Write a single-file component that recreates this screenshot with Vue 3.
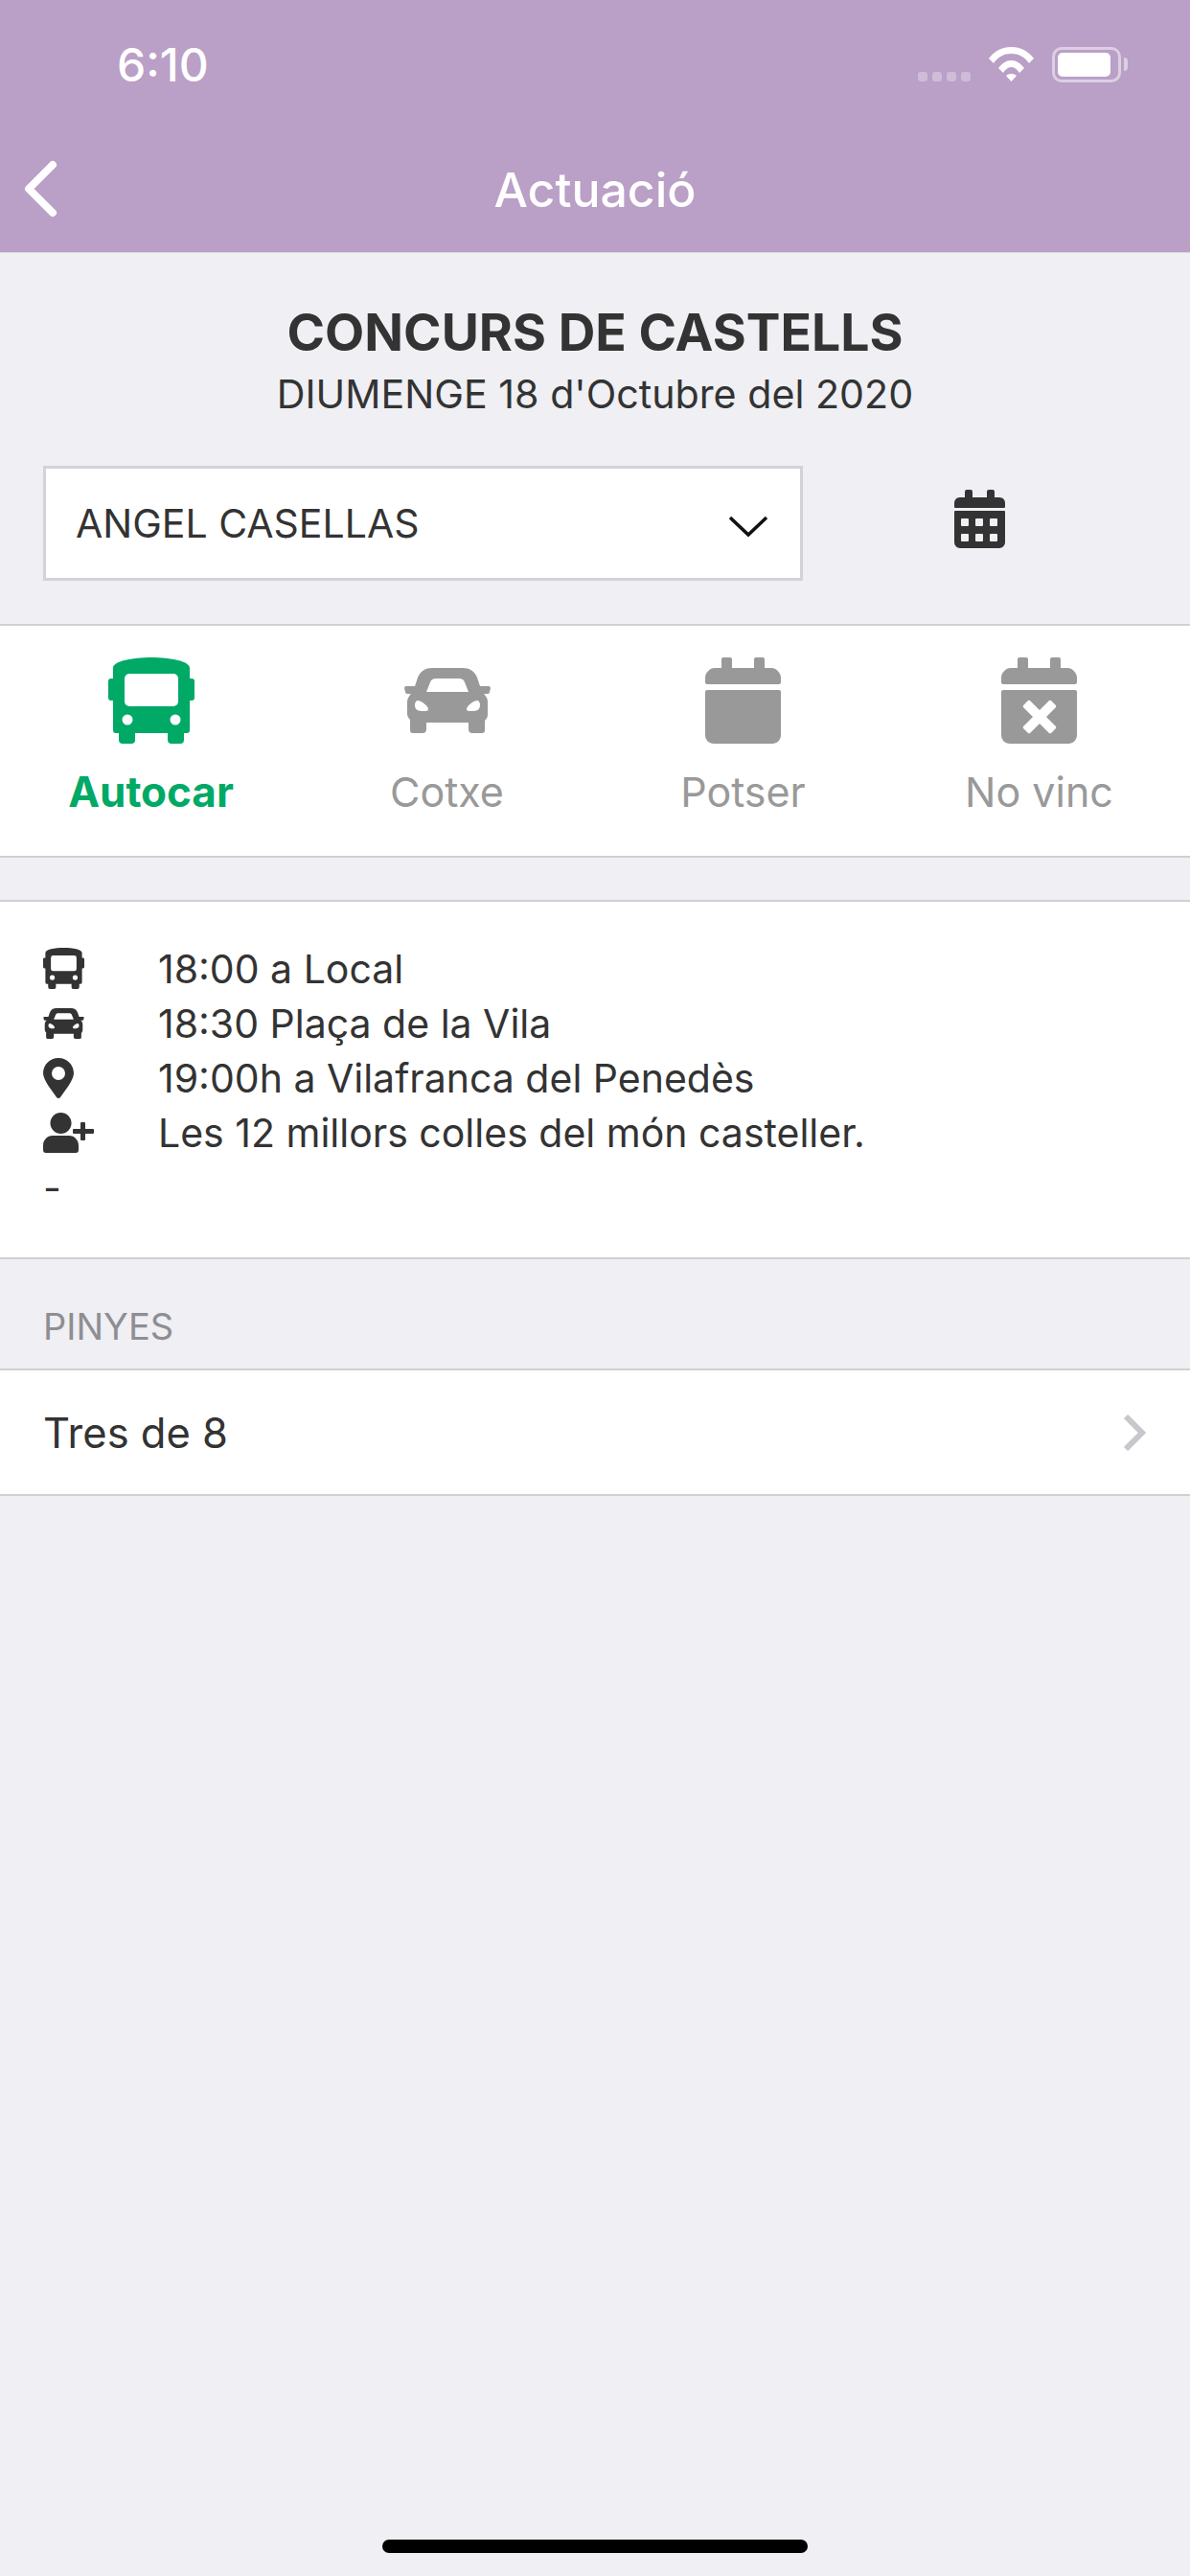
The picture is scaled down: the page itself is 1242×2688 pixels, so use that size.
<template>
  <div class="app">
    <svg class="defs" width="0" height="0">
      <symbol id="bus" viewBox="0 0 90 90">
        <path fill-rule="evenodd" d="M5 11C5 4 25 0 45 0s40 4 40 11v11h2a3 3 0 0 1 3 3v17a3 3 0 0 1-3 3h-2v31a3 3 0 0 1-3 3h-3v7a4 4 0 0 1-4 4h-9a4 4 0 0 1-4-4v-7H28v7a4 4 0 0 1-4 4h-9a4 4 0 0 1-4-4v-7H8a3 3 0 0 1-3-3V45H3a3 3 0 0 1-3-3V25a3 3 0 0 1 3-3h2zM22 17a5 5 0 0 0-5 5v24a5 5 0 0 0 5 5h46a5 5 0 0 0 5-5V22a5 5 0 0 0-5-5zM20 59.500a5.500 5.500 0 1 0 0 11a5.500 5.500 0 0 0 0-11zM70 59.500a5.500 5.500 0 1 0 0 11a5.500 5.500 0 0 0 0-11z" />
      </symbol>
      <symbol id="car" viewBox="0 0 90 68">
        <path fill-rule="evenodd" d="M29 0h32c7 0 12 3 15 10l3 9h9a2 2 0 0 1 2 2l-1 4a2 2 0 0 1-2 2h-4c2 2 4 5 4 8v14c0 2-1 4-3 6v10a3 3 0 0 1-3 3H71a4 4 0 0 1-4-4v-7H23v7a4 4 0 0 1-4 4H9a3 3 0 0 1-3-3V54c-2-2-3-4-3-6V35c0-3 2-6 4-8H3a2 2 0 0 1-2-2l-1-4a2 2 0 0 1 2-2h9l3-9C17 3 22 0 29 0zM33 11c-3 0-5 1-6 4l-4 10h44l-4-10c-1-3-3-4-6-4zM11 39c0 3 2 6 7 6h4c2 0 3-1 3-2c0-3-7-9-11-9c-2 0-3 2-3 5zM79 39c0 3-2 6-7 6h-4c-2 0-3-1-3-2c0-3 7-9 11-9c2 0 3 2 3 5z" />
      </symbol>
      <symbol id="cal" viewBox="0 0 79 90">
        <path d="M19 0h7a2 2 0 0 1 2 2v9h23V2a2 2 0 0 1 2-2h7a2 2 0 0 1 2 2v9h7c5 0 10 5 10 10v5a2 2 0 0 1-2 2H2a2 2 0 0 1-2-2v-5c0-5 5-10 10-10h7V2a2 2 0 0 1 2-2zM2 34h75a2 2 0 0 1 2 2v45c0 5-4 9-9 9H9c-5 0-9-4-9-9V36a2 2 0 0 1 2-2z" />
      </symbol>
      <symbol id="cal-x" viewBox="0 0 79 90">
        <path fill-rule="evenodd" d="M19 0h7a2 2 0 0 1 2 2v9h23V2a2 2 0 0 1 2-2h7a2 2 0 0 1 2 2v9h7c5 0 10 5 10 10v5a2 2 0 0 1-2 2H2a2 2 0 0 1-2-2v-5c0-5 5-10 10-10h7V2a2 2 0 0 1 2-2zM2 34h75a2 2 0 0 1 2 2v45c0 5-4 9-9 9H9c-5 0-9-4-9-9V36a2 2 0 0 1 2-2zM28 45l-5 5a2 2 0 0 0 0 2l10 10-10 10a2 2 0 0 0 0 2l5 5a2 2 0 0 0 2 0l10-10 10 10a2 2 0 0 0 2 0l5-5a2 2 0 0 0 0-2L47 62l10-10a2 2 0 0 0 0-2l-5-5a2 2 0 0 0-2 0L40 55 30 45a2 2 0 0 0-2 0z" />
      </symbol>
    </svg>

    <header class="topbar">
      <div class="status">
        <span class="time">6:10</span>
        <div class="status-right">
          <div class="signal"><i></i><i></i><i></i><i></i></div>
          <svg class="wifi" viewBox="0 0 47 36" width="47" height="36">
            <path fill="#fff" d="M0 12C6 4 14 0 23.500 0S41 4 47 12l-5 5C37 10 31 7 23.500 7S10 10 5 17zM10 22C14 17 18 14 23.500 14S33 17 37 22l-5 5C30 24 27 21 23.500 21S17 24 15 27zM18 30c2-1.500 3.500-2 5.500-2s3.500.5 5.500 2l-5.500 6z" />
          </svg>
          <div class="battery"><div class="battery-fill"></div></div>
          <div class="battery-cap"></div>
        </div>
      </div>
      <div class="navbar">
        <svg class="back" viewBox="0 0 36 60" width="36" height="60">
          <path d="M31 5 6 30l25 25" fill="none" stroke="#fff" stroke-width="8" stroke-linecap="round" stroke-linejoin="round" />
        </svg>
        <span class="nav-title">Actuació</span>
      </div>
    </header>

    <section class="heading">
      <h1>CONCURS DE CASTELLS</h1>
      <p>DIUMENGE 18 d'Octubre del 2020</p>
    </section>

    <div class="picker">
      <div class="select">
        <span>ANGEL CASELLAS</span>
        <svg viewBox="0 0 42 24" width="42" height="24">
          <path d="M2 3l19 18L40 3" fill="none" stroke="#111" stroke-width="3.500" />
        </svg>
      </div>
      <svg class="cal-btn" viewBox="0 0 53 61" width="53" height="61">
        <path fill="#333" fill-rule="evenodd" d="M13 0h4a2 2 0 0 1 2 2v6h15V2a2 2 0 0 1 2-2h4a2 2 0 0 1 2 2v6h5c4 0 6 3 6 6v4a1 1 0 0 1-1 1H1a1 1 0 0 1-1-1v-4c0-3 2-6 6-6h5V2a2 2 0 0 1 2-2zM1 22h51a1 1 0 0 1 1 1v32c0 3-3 6-6 6H6c-3 0-6-3-6-6V23a1 1 0 0 1 1-1zM8 30a1 1 0 0 0-1 1v6a1 1 0 0 0 1 1h6a1 1 0 0 0 1-1v-6a1 1 0 0 0-1-1zM23 30a1 1 0 0 0-1 1v6a1 1 0 0 0 1 1h6a1 1 0 0 0 1-1v-6a1 1 0 0 0-1-1zM38 30a1 1 0 0 0-1 1v6a1 1 0 0 0 1 1h6a1 1 0 0 0 1-1v-6a1 1 0 0 0-1-1zM8 46a1 1 0 0 0-1 1v6a1 1 0 0 0 1 1h6a1 1 0 0 0 1-1v-6a1 1 0 0 0-1-1zM23 46a1 1 0 0 0-1 1v6a1 1 0 0 0 1 1h6a1 1 0 0 0 1-1v-6a1 1 0 0 0-1-1zM38 46a1 1 0 0 0-1 1v6a1 1 0 0 0 1 1h6a1 1 0 0 0 1-1v-6a1 1 0 0 0-1-1z" />
      </svg>
    </div>

    <nav class="tabs">
      <div v-for="t in tabs" :key="t.label" class="tab" :class="{ active: t.active }">
        <div class="tab-icon">
          <svg :width="t.w" :height="t.h"><use :href="'#' + t.icon" /></svg>
        </div>
        <span>{{ t.label }}</span>
      </div>
    </nav>

    <section class="info">
      <div class="info-row">
        <div class="info-icon"><svg width="43" height="43"><use href="#bus" /></svg></div>
        <span>18:00 a Local</span>
      </div>
      <div class="info-row">
        <div class="info-icon"><svg width="43" height="32"><use href="#car" /></svg></div>
        <span>18:30 Plaça de la Vila</span>
      </div>
      <div class="info-row">
        <div class="info-icon">
          <svg viewBox="0 0 32 42" width="32" height="42">
            <path fill="#333" fill-rule="evenodd" d="M16 0c9 0 16 7 16 16c0 7-10 19-14 25a2.500 2.500 0 0 1-4 0C10 35 0 23 0 16C0 7 7 0 16 0zM16 9a7 7 0 1 0 0 14a7 7 0 0 0 0-14z" />
          </svg>
        </div>
        <span>19:00h a Vilafranca del Penedès</span>
      </div>
      <div class="info-row">
        <div class="info-icon">
          <svg viewBox="0 0 53 42" width="53" height="42">
            <circle cx="18.500" cy="11" r="11" fill="#333" />
            <path fill="#333" d="M10 24h17c6 0 10 5 10 10v5a3 3 0 0 1-3 3H3a3 3 0 0 1-3-3v-5c0-5 4-10 10-10zM40 10h3a1 1 0 0 1 1 1v6h8a1 1 0 0 1 1 1v3a1 1 0 0 1-1 1h-8v6a1 1 0 0 1-1 1h-3a1 1 0 0 1-1-1v-6h-7a1 1 0 0 1-1-1v-3a1 1 0 0 1 1-1h7v-6a1 1 0 0 1 1-1z" />
          </svg>
        </div>
        <span>Les 12 millors colles del món casteller.</span>
      </div>
      <div class="info-row">-</div>
    </section>

    <div class="section-label">PINYES</div>

    <div class="list-row">
      <span>Tres de 8</span>
      <svg viewBox="0 0 24 38" width="24" height="38">
        <path d="M2 2l17 17L2 36" fill="none" stroke="#c7c7cc" stroke-width="6" />
      </svg>
    </div>

    <div class="home-bar"></div>
  </div>
</template>

<script setup>
const tabs = [
  { label: 'Autocar', icon: 'bus', w: 90, h: 90, active: true },
  { label: 'Cotxe', icon: 'car', w: 90, h: 68 },
  { label: 'Potser', icon: 'cal', w: 79, h: 90 },
  { label: 'No vinc', icon: 'cal-x', w: 79, h: 90 }
]
</script>

<style>
html, body {
  margin: 0;
  background: #efeff4;
}
</style>

<style scoped>
.app {
  position: relative;
  height: 2688px;
  overflow: hidden;
  background: #efeff4;
  color: #333;
  font-family: Inter, "Noto Sans", sans-serif;
}

.defs {
  position: absolute;
}

.topbar {
  background: #ba9fc7;
  color: #fff;
  height: 264px;
  border-bottom: 1px solid #d8d8dc;
  box-sizing: border-box;
}

.status {
  display: flex;
  justify-content: space-between;
  align-items: center;
  height: 68px;
  padding: 33px 65px 33px 122px;
}

.time {
  font-size: 48px;
  font-weight: 500;
}

.status-right {
  display: flex;
  align-items: center;
}

.signal {
  display: flex;
  gap: 5px;
  align-self: flex-end;
  margin: 0 19px 1px 0;
}

.signal i {
  width: 10px;
  height: 10px;
  border-radius: 3px;
  background: rgba(255, 255, 255, 0.3);
}

.wifi {
  margin-right: 19px;
}

.battery {
  width: 72px;
  height: 37px;
  box-sizing: border-box;
  border: 3px solid rgba(255, 255, 255, 0.5);
  border-radius: 10px;
  padding: 3px 8px 3px 3px;
}

.battery-fill {
  height: 100%;
  background: #fff;
  border-radius: 5px;
}

.battery-cap {
  width: 4px;
  height: 14px;
  margin-left: 3px;
  border-radius: 0 4px 4px 0;
  background: rgba(255, 255, 255, 0.5);
}

.navbar {
  position: relative;
  display: flex;
  justify-content: center;
  align-items: center;
  height: 128px;
}

.back {
  position: absolute;
  left: 24px;
  top: 33px;
}

.nav-title {
  font-size: 50px;
  font-weight: 500;
}

.heading {
  padding-top: 51px;
  text-align: center;
}

.heading h1 {
  margin: 0;
  font-size: 53.500px;
  line-height: 64px;
  font-weight: 700;
}

.heading p {
  margin: 0;
  font-size: 41.200px;
  line-height: 64px;
}

.picker {
  display: flex;
  align-items: flex-start;
  padding: 43px 0 0 45px;
}

.select {
  display: flex;
  justify-content: space-between;
  align-items: center;
  width: 793px;
  height: 120px;
  box-sizing: border-box;
  padding: 0 33px 0 31px;
  background: #fff;
  border: 3px solid #d3d3d6;
  font-size: 41px;
}

.select svg {
  margin-top: 6px;
}

.cal-btn {
  margin: 25px 0 0 158px;
}

.tabs {
  display: grid;
  grid-template-columns: repeat(4, 1fr);
  margin-top: 45px;
  height: 244px;
  box-sizing: border-box;
  padding: 33px 3px 0;
  background: #fff;
  border-top: 2px solid #d0d0d4;
  border-bottom: 2px solid #d0d0d4;
}

.tab {
  display: flex;
  flex-direction: column;
  align-items: center;
  color: #999;
  fill: #999;
  font-size: 43px;
  line-height: 52px;
}

.tab.active {
  color: #00a966;
  fill: #00a966;
  font-size: 44px;
  font-weight: 700;
}

.tab-icon {
  display: flex;
  align-items: center;
  height: 90px;
  margin-bottom: 24px;
}

.info {
  margin-top: 44px;
  height: 375px;
  box-sizing: border-box;
  padding: 41px 0 0 45px;
  background: #fff;
  border-top: 2px solid #d0d0d4;
  border-bottom: 2px solid #d0d0d4;
  font-size: 41px;
  fill: #333;
}

.info-row {
  display: flex;
  align-items: center;
  height: 57px;
}

.info-icon {
  display: flex;
  align-items: center;
  width: 120px;
  flex-shrink: 0;
}

.section-label {
  height: 114px;
  box-sizing: border-box;
  padding: 48px 45px 0;
  font-size: 38px;
  line-height: 44px;
  color: #8e8e93;
}

.list-row {
  display: flex;
  justify-content: space-between;
  align-items: center;
  height: 133px;
  box-sizing: border-box;
  padding: 0 45px;
  background: #fff;
  border-top: 2px solid #d0d0d4;
  border-bottom: 2px solid #d0d0d4;
  font-size: 43.500px;
}

.home-bar {
  position: absolute;
  left: 399px;
  bottom: 24px;
  width: 444px;
  height: 14px;
  border-radius: 7px;
  background: #000;
}
</style>
